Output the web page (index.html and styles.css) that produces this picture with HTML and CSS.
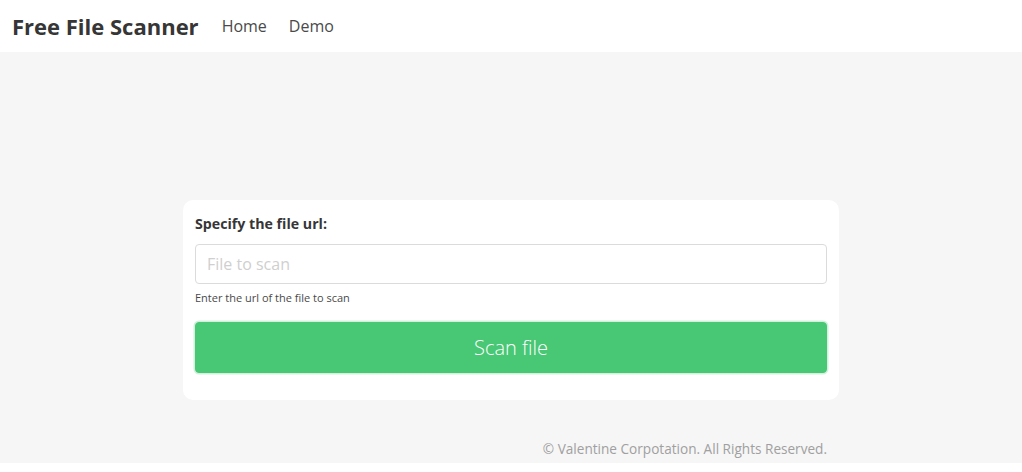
FILE: index.html
```html
<!DOCTYPE html>
<html>
<head>
<meta charset="utf-8">
<title>Free File Scanner</title>
<link rel="stylesheet" href="styles.css">
</head>
<body>
<div class="page">
  <nav class="navbar">
    <a class="brand" href="#">Free File Scanner</a>
    <a class="nav-link" href="#">Home</a>
    <a class="nav-link" href="#">Demo</a>
  </nav>
  <main class="main">
    <form class="card">
      <label class="label" for="url">Specify the file url:</label>
      <input class="input" id="url" type="text" placeholder="File to scan">
      <p class="help">Enter the url of the file to scan</p>
      <button class="button" type="button">Scan file</button>
    </form>
    <footer class="footer">© Valentine Corpotation. All Rights Reserved.</footer>
  </main>
</div>
</body>
</html>
```
FILE: styles.css
```css
html, body {
  margin: 0;
  padding: 0;
  background: #ffffff;
}
body {
  font-family: "Open Sans", "Noto Sans", sans-serif;
  color: #363636;
}
.page {
  height: 463px;
  display: flex;
  flex-direction: column;
  background: #f6f6f6;
}
.navbar {
  height: 52px;
  background: #ffffff;
  display: flex;
  align-items: center;
  padding-left: 12px;
  box-sizing: border-box;
}
.brand {
  font-size: 22px;
  font-weight: 700;
  color: #363636;
  text-decoration: none;
  margin-right: 23px;
}
.nav-link {
  font-size: 16px;
  color: #4a4a4a;
  text-decoration: none;
  margin-right: 22px;
}
.main {
  flex: 1;
  display: flex;
  flex-direction: column;
  align-items: center;
  padding-top: 148px;
}
.card {
  width: 656px;
  box-sizing: border-box;
  background: #ffffff;
  border-radius: 10px;
  padding: 14px 12px 27px;
  display: flex;
  flex-direction: column;
}
.label {
  font-size: 14.2px;
  font-weight: 700;
  color: #363636;
  line-height: 20px;
  margin-bottom: 10px;
}
.input {
  height: 40px;
  box-sizing: border-box;
  border: 1px solid #dbdbdb;
  border-radius: 4px;
  padding: 0 11px;
  font-family: inherit;
  font-size: 16px;
  color: #363636;
  outline: none;
}
.input::placeholder {
  color: #cfcfcf;
}
.help {
  font-size: 11px;
  color: #4a4a4a;
  margin: 7px 0 17px;
  line-height: 14px;
}
.button {
  height: 51px;
  border: 1px solid #48c774;
  box-shadow: 0 0 0 1.5px #d2f1dd;
  border-radius: 4px;
  background: #48c774;
  color: #ffffff;
  font-family: inherit;
  font-size: 20px;
  font-weight: 300;
}
.footer {
  width: 656px;
  box-sizing: border-box;
  text-align: right;
  padding-right: 12px;
  margin-top: 39px;
  font-size: 13.6px;
  color: #a0a0a0;
}
```
